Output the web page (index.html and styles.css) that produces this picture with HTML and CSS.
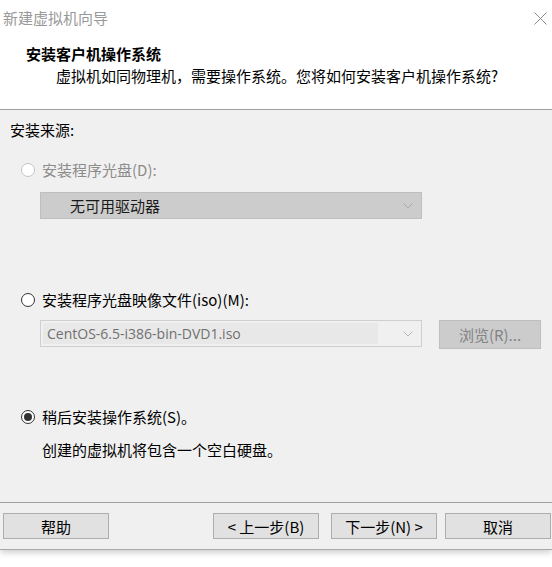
FILE: index.html
```html
<!DOCTYPE html>
<html lang="zh-CN">
<head>
<meta charset="utf-8">
<title>新建虚拟机向导</title>
<link rel="stylesheet" href="styles.css">
</head>
<body>
<div class="dialog">
  <div class="titlebar">
    <span class="wintitle">新建虚拟机向导</span>
    <svg class="close" width="13" height="13" viewBox="0 0 13 13"><path d="M0.5 0.5 L12.5 12.5 M12.5 0.5 L0.5 12.5" stroke="#8a8a8a" stroke-width="1" fill="none"/></svg>
  </div>
  <div class="header">
    <div class="h-title">安装客户机操作系统</div>
    <div class="h-sub">虚拟机如同物理机，需要操作系统。您将如何安装客户机操作系统?</div>
  </div>
  <div class="content">
    <div class="section-label">安装来源:</div>

    <label class="radio-row disabled r1">
      <span class="radio"></span>
      <span>安装程序光盘(D):</span>
    </label>
    <div class="combo combo-disabled">
      <span class="combo-text">无可用驱动器</span>
      <svg class="chev" width="10" height="6" viewBox="0 0 10 6"><path d="M0.5 0.5 L5 5 L9.5 0.5" stroke="#a8a8a8" fill="none"/></svg>
    </div>

    <label class="radio-row r2">
      <span class="radio"></span>
      <span>安装程序光盘映像文件(iso)(M):</span>
    </label>
    <div class="iso-row">
      <div class="combo combo-iso">
        <span class="combo-field">CentOS-6.5-i386-bin-DVD1.iso</span>
        <svg class="chev" width="10" height="6" viewBox="0 0 10 6"><path d="M0.5 0.5 L5 5 L9.5 0.5" stroke="#b4b4b4" fill="none"/></svg>
      </div>
      <div class="browse">浏览(R)...</div>
    </div>

    <label class="radio-row r3">
      <span class="radio checked"></span>
      <span>稍后安装操作系统(S)。</span>
    </label>
    <div class="note">创建的虚拟机将包含一个空白硬盘。</div>
  </div>
  <div class="footer">
    <div class="btn">帮助</div>
    <div class="btn-group">
      <div class="btn btn-back">&lt; 上一步(B)</div>
      <div class="btn btn-next">下一步(N) &gt;</div>
      <div class="btn btn-cancel">取消</div>
    </div>
  </div>
</div>
</body>
</html>
```

FILE: styles.css
```css
* { box-sizing: border-box; }
html, body {
  margin: 0;
  padding: 0;
  background: #ffffff;
}
body {
  font-family: "Noto Sans CJK SC", "Noto Sans", sans-serif;
  font-size: 15px;
  color: #000;
  width: 552px;
  height: 567px;
  overflow: hidden;
}
.dialog {
  width: 552px;
  height: 550px;
  background: #f0f0f0;
  border-bottom: 1px solid #a8a8a8;
  box-shadow: 0 3px 6px rgba(0,0,0,0.18);
  display: flex;
  flex-direction: column;
}
.titlebar {
  height: 38px;
  background: #fff;
  display: flex;
  align-items: center;
  justify-content: space-between;
  padding: 0 5px 2px 3px;
}
.wintitle {
  color: #999999;
  font-size: 15px;
  line-height: 20px;
}
.header {
  background: #fff;
  height: 72px;
  border-bottom: 1px solid #a0a0a0;
  padding: 5px 0 0 26px;
}
.h-title {
  font-weight: bold;
  font-size: 15px;
  line-height: 22px;
}
.h-sub {
  font-size: 15px;
  line-height: 22px;
  padding-left: 30px;
}
.content {
  flex: 1;
  padding: 9px 0 0 10px;
}
.section-label {
  line-height: 22px;
}
.radio-row {
  display: flex;
  align-items: center;
  gap: 7px;
  margin-left: 11px;
  line-height: 22px;
}
.radio-row.disabled { color: #8c8c8c; }
.r1 { margin-top: 18px; }
.r2 { margin-top: 70px; }
.r3 { margin-top: 57px; }
.radio {
  width: 14px;
  height: 14px;
  border: 1px solid #333333;
  border-radius: 50%;
  background: #fff;
  flex: none;
  display: flex;
  align-items: center;
  justify-content: center;
}
.disabled .radio { border-color: #c4c4c4; }
.radio.checked::after {
  content: "";
  width: 8px;
  height: 8px;
  border-radius: 50%;
  background: #333333;
}
.combo {
  width: 382px;
  height: 27px;
  margin-left: 30px;
  display: flex;
  align-items: center;
  justify-content: space-between;
  padding-right: 8px;
}
.combo-disabled {
  margin-top: 11px;
  background: #cccccc;
  border: 1px solid #bfbfbf;
  padding-left: 29px;
  color: #1a1a1a;
}
.iso-row {
  display: flex;
  align-items: flex-start;
  margin-top: 9px;
}
.combo-iso {
  height: 27px;
  border: 1px solid #cfcfcf;
  background: #f0f0f0;
  padding: 2px 8px 2px 2px;
}
.combo-field {
  background: #e8e8e8;
  height: 21px;
  width: 335px;
  color: #707070;
  padding-left: 4px;
  line-height: 21px;
  font-family: "Open Sans", "Noto Sans CJK SC", sans-serif;
  font-size: 14px;
}
.browse {
  margin-left: 17px;
  width: 102px;
  height: 29px;
  background: #cccccc;
  border: 1px solid #bfbfbf;
  color: #838383;
  display: flex;
  align-items: center;
  justify-content: center;
}
.note {
  margin: 11px 0 0 32px;
  line-height: 22px;
}
.footer {
  height: 47px;
  border-top: 1px solid #a0a0a0;
  display: flex;
  justify-content: space-between;
  padding: 10px 1px 0 3px;
}
.btn-group {
  display: flex;
}
.btn {
  width: 106px;
  height: 26px;
  background: #e1e1e1;
  border: 1px solid #adadad;
  display: flex;
  align-items: center;
  justify-content: center;
  font-size: 15px;
}
.btn-next { margin-left: 12px; }
.btn-cancel { margin-left: 8px; }
```
